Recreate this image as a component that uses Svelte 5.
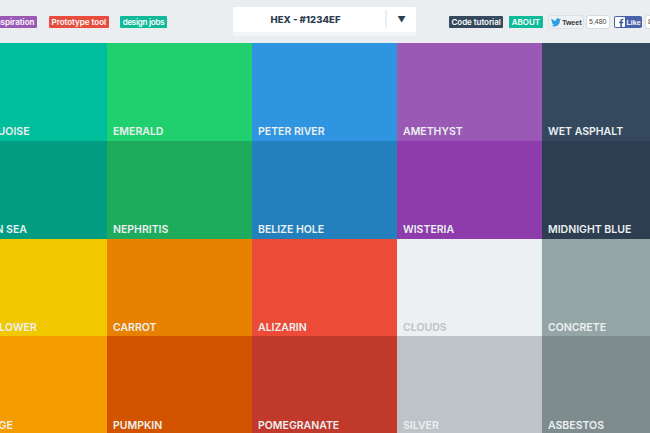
<script>
    const rows = [
        ["#00bd9c", "TURQUOISE"], ["#20d06e", "EMERALD"], ["#2f95e0", "PETER RIVER"], ["#9b59b6", "AMETHYST"], ["#34495e", "WET ASPHALT"],
        ["#009d82", "GREEN SEA"], ["#1fab5c", "NEPHRITIS"], ["#2380bd", "BELIZE HOLE"], ["#8e3cab", "WISTERIA"], ["#2c3e50", "MIDNIGHT BLUE"],
        ["#f1c800", "SUN FLOWER"], ["#e98100", "CARROT"], ["#ec4c37", "ALIZARIN"], ["#ecf0f1", "CLOUDS"], ["#95a5a6", "CONCRETE"],
        ["#f59d00", "ORANGE"], ["#d35400", "PUMPKIN"], ["#c0392b", "POMEGRANATE"], ["#bdc3c7", "SILVER"], ["#7f8c8d", "ASBESTOS"]
    ]
</script>

<div class="page">
    <header>
        <div class="links">
            <span class="tag purple">Inspiration</span>
            <span class="tag red">Prototype tool</span>
            <span class="tag green jobs">design jobs</span>
        </div>

        <div class="picker">
            <div class="format">HEX - #1234EF</div>
            <div class="arrow">▼</div>
        </div>

        <div class="social">
            <span class="tag navy">Code tutorial</span>
            <span class="tag green about">ABOUT</span>
            <span class="tweet">
                <svg width="10" height="9" viewBox="0 0 24 20"><path fill="#2e9fe0" d="M24 2.4c-.9.4-1.800.7-2.800.8 1-.6 1.800-1.600 2.200-2.700-1 .6-2 1-3.100 1.200A4.900 4.900 0 0 0 11.900 6.200 14 14 0 0 1 1.700.9a4.900 4.900 0 0 0 1.500 6.600c-.8 0-1.600-.2-2.200-.6 0 2.400 1.700 4.400 3.900 4.900-.7.200-1.500.2-2.200.1.600 2 2.400 3.400 4.600 3.400A9.900 9.900 0 0 1 0 17.300 14 14 0 0 0 21.500 4.900c1-.7 1.800-1.500 2.500-2.500z"/></svg>
                Tweet
            </span>
            <span class="count">5,480</span>
            <span class="like">
                <svg width="10" height="10" viewBox="0 0 11 11"><rect width="11" height="11" rx="1" fill="#fff"/><path fill="#3b5998" d="M7.600 11V6.800h1.400l.2-1.600H7.600v-1c0-.5.2-.8.800-.8h.9V1.900c-.2 0-.7-.1-1.300-.1-1.300 0-2.100.8-2.100 2.200v1.200H4.500v1.600h1.400V11z"/></svg>
                Like
            </span>
            <span class="count">8,210</span>
        </div>
    </header>

    <main>
        {#each rows as [color, name]}
            <div class="swatch" class:clouds={name === "CLOUDS"} style="background: {color}">{name}</div>
        {/each}
    </main>
</div>

<style>
    :global(body) {
        overflow: hidden;
        background: #ecf0f1;
    }

    .page {
        width: 650px;
        height: 433px;
        overflow: hidden;
        font-family: "Inter", "Liberation Sans", sans-serif;
    }

    header {
        height: 43px;
        display: flex;
        background: #ebeef0;
        white-space: nowrap;
    }

    .links {
        display: flex;
        gap: 12px;
        width: 271px;
        flex: none;
        margin-left: -38px;
        padding-top: 16px;
        padding-left: 29px;
        box-sizing: border-box;
    }

    .tag {
        height: 12px;
        line-height: 12px;
        padding: 0 2.500px;
        font-size: 8px;
        font-weight: 600;
        color: #fff;
        border-radius: 1px;
    }

    .purple { background: #9b59b6; }
    .red { background: #e84c3d; }
    .green { background: #0fba98; }
    .navy { background: #34495e; }

    .jobs {
        margin-left: -.5px;
        letter-spacing: -.25px;
    }

    .picker {
        width: 183px;
        height: 29px;
        margin-top: 7px;
        flex: none;
        display: flex;
        box-sizing: border-box;
        background: #fff;
        border-bottom: 4px solid #f3f4f4;
        border-radius: 2px;
        color: #2c3e50;
    }

    .format {
        flex: 1;
        margin: 3px 0;
        padding-right: 7px;
        font-size: 9.600px;
        font-weight: 800;
        line-height: 20px;
        text-align: center;
        border-right: 2px solid #ecf0f1;
    }

    .arrow {
        width: 29px;
        text-align: center;
        font-size: 8.500px;
        line-height: 27px;
    }

    .social {
        display: flex;
        align-items: flex-start;
        gap: 6px;
        margin-left: 33px;
        padding-top: 16px;
    }

    .navy {
        letter-spacing: -.05px;
    }

    .about {
        margin-left: -.5px;
        padding: 0 3px;
    }

    .tweet, .like {
        height: 12px;
        display: flex;
        align-items: center;
        gap: 1.500px;
        padding: 0 1.500px;
        font-size: 7px;
        font-weight: 700;
        border-radius: 2px;
        font-family: "Liberation Sans", sans-serif;
    }

    .tweet {
        color: #333;
        background: #eef1f3;
        box-shadow: 0 0 0 1px #dde1e3;
    }

    .like {
        margin-left: -1px;
        color: #fff;
        background: #4861a8;
    }

    .count {
        height: 12px;
        line-height: 12px;
        padding: 0 2px;
        margin-left: -2px;
        font-size: 7px;
        font-family: "Liberation Sans", sans-serif;
        color: #444;
        background: #fff;
        border-radius: 2px;
        box-shadow: 0 0 0 1px #d8dcde;
    }

    main {
        display: grid;
        grid-template-columns: repeat(5, 145px);
        grid-auto-rows: 97.750px;
        margin-left: -38px;
        width: 725px;
    }

    .swatch {
        display: flex;
        align-items: flex-end;
        box-sizing: border-box;
        padding: 0 0 2.500px 6px;
        font-size: 10.500px;
        font-weight: 600;
        color: #ecf0f1;
    }

    .clouds {
        color: #bdc3c7;
    }
</style>
